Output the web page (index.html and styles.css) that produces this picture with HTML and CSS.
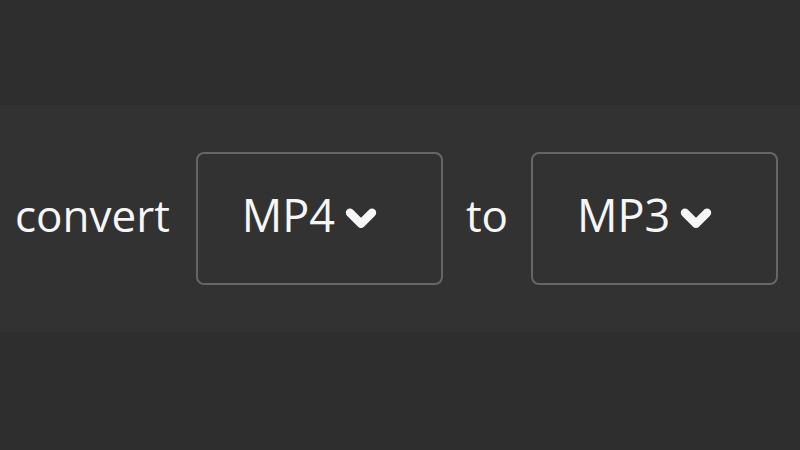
FILE: index.html
```html
<!DOCTYPE html>
<html lang="en">

<head>
	<meta charset="UTF-8">
	<meta name="viewport" content="width=device-width, initial-scale=1.0">
	<title>Convert MP4 to MP3</title>
	<link rel="stylesheet" href="styles.css">
</head>

<body>
	<div class="band">
		<span class="word">convert</span>
		<div class="select">
			<span>MP4</span>
			<svg class="chevron" viewBox="0 0 30 20"><polyline points="4.5,4.5 15,15 25.5,4.5" /></svg>
		</div>
		<span class="word to">to</span>
		<div class="select">
			<span>MP3</span>
			<svg class="chevron" viewBox="0 0 30 20"><polyline points="4.5,4.5 15,15 25.5,4.5" /></svg>
		</div>
	</div>
</body>

</html>
```

FILE: styles.css
```css
body {
	background: #2e2e2e;
	color: #f6f6f6;
	font-family: "Open Sans", sans-serif;
	margin: 0;
	padding-top: 105px;
}

.band {
	align-items: center;
	background: #323232;
	display: flex;
	height: 227px;
	padding-left: 15px;
}

.word {
	font-size: 44px;
	line-height: 1;
	margin-right: 26px;
	padding-bottom: 8px;
}

.to {
	margin-left: 23px;
	margin-right: 23px;
}

.select {
	align-items: center;
	border: 2px solid #666;
	border-radius: 8px;
	box-sizing: border-box;
	display: flex;
	font-size: 45px;
	gap: 10px;
	height: 133px;
	justify-content: center;
	line-height: 1;
	padding: 0 20px 8px 0;
	width: 247px;
}

.chevron {
	fill: none;
	height: 21px;
	margin-top: 8px;
	stroke: #f6f6f6;
	stroke-linecap: round;
	stroke-linejoin: round;
	stroke-width: 8;
	width: 32px;
}
```
